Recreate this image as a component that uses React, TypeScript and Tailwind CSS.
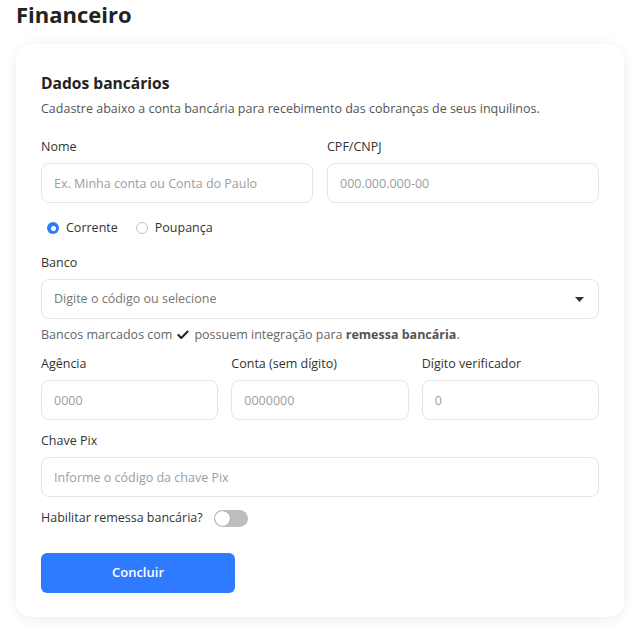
import { Check } from "lucide-react";

const inputCls =
  "h-10 w-full rounded-lg border border-[#e3e5e8] bg-white px-3 text-[12.5px] text-[#333] placeholder:text-[#9a9ea3] outline-none";

function Field({ label, placeholder }: { label: string; placeholder: string }) {
  return (
    <div className="flex flex-col">
      <label className="mb-[7px] text-[12.5px] leading-[18px] text-[#333]">{label}</label>
      <input className={inputCls} placeholder={placeholder} />
    </div>
  );
}

export default function App() {
  return (
    <div className="min-h-[642px] bg-white px-4" style={{ fontFamily: "'Open Sans', sans-serif" }}>
      <h1 className="text-[22px] font-bold leading-[28px] text-[#222]">Financeiro</h1>

      <div className="mt-[16px] rounded-2xl bg-white px-[25px] pb-[24px] pt-[28px] shadow-[0_2px_14px_rgba(0,0,0,0.08)]">
        <h2 className="text-[15.6px] font-bold leading-[22px] text-[#222]">Dados bancários</h2>
        <p className="mt-[6px] text-[12.5px] leading-[18px] text-[#555]">
          Cadastre abaixo a conta bancária para recebimento das cobranças de seus inquilinos.
        </p>

        <div className="mt-[20px] grid grid-cols-2 gap-[14px]">
          <Field label="Nome" placeholder="Ex. Minha conta ou Conta do Paulo" />
          <Field label="CPF/CNPJ" placeholder="000.000.000-00" />
        </div>

        <div className="mt-[16px] flex items-center gap-[18px] pl-[6px] text-[12.5px] leading-[18px] text-[#333]">
          <label className="flex items-center gap-[7px]">
            <span className="flex h-3 w-3 items-center justify-center rounded-full bg-[#2f7bf5]">
              <span className="h-[5px] w-[5px] rounded-full bg-white" />
            </span>
            Corrente
          </label>
          <label className="flex items-center gap-[7px]">
            <span className="h-3 w-3 rounded-full border border-[#c4c4c4] bg-white" />
            Poupança
          </label>
        </div>

        <div className="mt-[17px] flex flex-col">
          <label className="mb-[7px] text-[12.5px] leading-[18px] text-[#333]">Banco</label>
          <div className="flex h-10 items-center justify-between rounded-lg border border-[#e3e5e8] px-3 text-[12.5px] text-[#777]">
            <span>Digite o código ou selecione</span>
            <svg width="9" height="5" viewBox="0 0 9 5" className="mr-[2px]">
              <path d="M0 0h9L4.5 5z" fill="#333" />
            </svg>
          </div>
        </div>

        <p className="mt-[7px] flex items-center text-[12.5px] leading-[18px] text-[#666]">
          Bancos marcados com
          <Check className="mx-[4px] h-[14px] w-[14px] text-[#222]" strokeWidth={3.5} />
          possuem integração para&nbsp;<b className="font-bold text-[#555]">remessa bancária</b>.
        </p>

        <div className="mt-[11px] grid grid-cols-3 gap-[13px]">
          <Field label="Agência" placeholder="0000" />
          <Field label="Conta (sem dígito)" placeholder="0000000" />
          <Field label="Dígito verificador" placeholder="0" />
        </div>

        <div className="mt-[12px]">
          <Field label="Chave Pix" placeholder="Informe o código da chave Pix" />
        </div>

        <div className="mt-[12px] flex items-center gap-[11px] text-[12.5px] leading-[18px] text-[#333]">
          Habilitar remessa bancária?
          <span className="flex h-[17px] w-[34px] items-center rounded-full bg-[#bdbdbd] p-[1px]">
            <span className="h-[15px] w-[15px] rounded-full bg-white shadow-[0_0_1px_rgba(0,0,0,0.4)]" />
          </span>
        </div>

        <button className="mt-[26px] h-10 w-[194px] rounded-md bg-[#2f7bff] text-[13px] font-semibold text-white">
          Concluir
        </button>
      </div>
    </div>
  );
}
